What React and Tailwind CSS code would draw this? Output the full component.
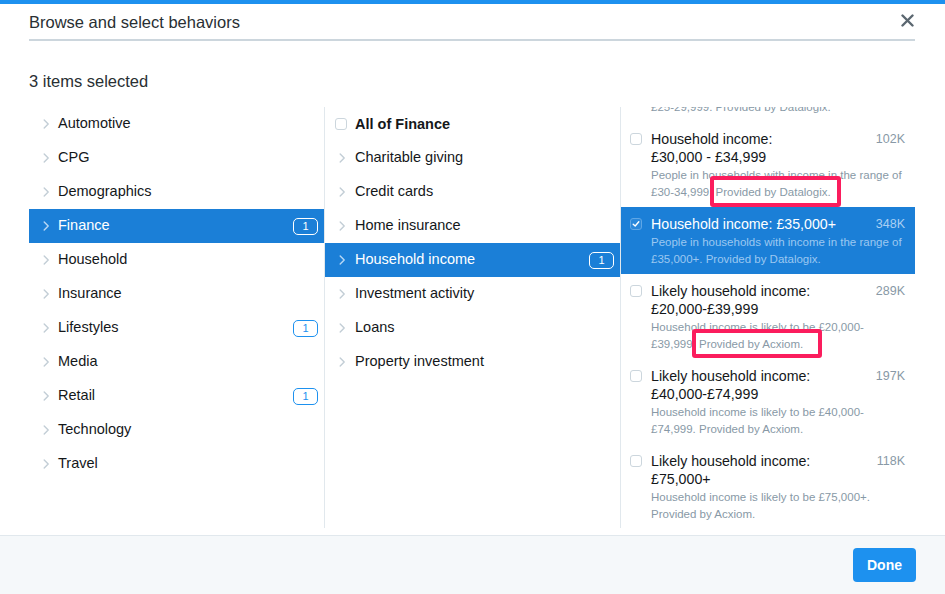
import { useState } from 'react';

const categories = [
    'Automotive', 'CPG', 'Demographics', 'Finance', 'Household', 'Insurance',
    'Lifestyles', 'Media', 'Retail', 'Technology', 'Travel',
];
const categoryCounts = { Finance: 1, Lifestyles: 1, Retail: 1 };

const financeItems = [
    'Charitable giving', 'Credit cards', 'Home insurance', 'Household income',
    'Investment activity', 'Loans', 'Property investment',
];
const financeCounts = { 'Household income': 1 };

// desc lines: a string, or [before, flagged] where the flagged part gets a marker box
const behaviors = [
    {
        id: 1,
        title: ['Household income:', '£25,000\u00a0-\u00a0£29,999'],
        size: '96K',
        desc: ['People in households with income in the range of', '£25-29,999. Provided by Datalogix.'],
    },
    {
        id: 2,
        title: ['Household income:', '£30,000\u00a0-\u00a0£34,999'],
        size: '102K',
        desc: ['People in households with income in the range of', ['£30-34,999. ', 'Provided by Datalogix.']],
        mark: 'datalogix',
    },
    {
        id: 3,
        title: ['Household income: £35,000+'],
        size: '348K',
        desc: ['People in households with income in the range of', '£35,000+. Provided by Datalogix.'],
    },
    {
        id: 4,
        title: ['Likely household income:', '£20,000-£39,999'],
        size: '289K',
        desc: ['Household income is likely to be £20,000-', ['£39,999. ', 'Provided by Acxiom.']],
        mark: 'acxiom',
    },
    {
        id: 5,
        title: ['Likely household income:', '£40,000-£74,999'],
        size: '197K',
        desc: ['Household income is likely to be £40,000-', '£74,999. Provided by Acxiom.'],
    },
    {
        id: 6,
        title: ['Likely household income:', '£75,000+'],
        size: '118K',
        desc: ['Household income is likely to be £75,000+.', 'Provided by Acxiom.'],
    },
];

function Chevron({ light }) {
    return (
        <svg width="8" height="10" viewBox="0 0 8 10" className="shrink-0 mr-[8px]">
            <polyline
                points="2.2,1 6.2,5 2.2,9"
                fill="none"
                stroke={light ? '#b9d8f5' : '#c3ced6'}
                strokeWidth="1.4"
                strokeLinecap="round"
                strokeLinejoin="round"
            />
        </svg>
    );
}

function Badge({ n, active }) {
    return (
        <span className={`ml-auto mr-[6px] w-[25px] h-[17px] flex items-center justify-center rounded-[5px] border-[1.5px] text-[11px] leading-none ${
            active ? 'border-white text-white' : 'border-[#1d91ef] text-[#1d91ef]'
        }`}>
            {n}
        </span>
    );
}

function Checkbox({ checked }) {
    if (checked) {
        return (
            <span className="block w-[12px] h-[12px] shrink-0 rounded-[3px] border border-[#5ea6e6] bg-[#2a88db] flex items-center justify-center">
                <svg width="8" height="8" viewBox="0 0 8 8">
                    <polyline points="1.2,4.2 3.2,6 6.8,1.8" fill="none" stroke="#fff" strokeWidth="1.4" strokeLinecap="round" strokeLinejoin="round" />
                </svg>
            </span>
        );
    }
    return <span className="block w-[12px] h-[12px] shrink-0 rounded-[3px] border border-[#ccd6dd] bg-white" />;
}

function Flagged({ text, kind }) {
    return (
        <span className="relative inline-block leading-[17px]">
            {text}
            {kind === 'datalogix' ? (
                <span className="absolute -top-[8px] -bottom-[6px] -left-[6px] -right-[10px] border-4 border-[#fb1d5d] rounded-[3px]" />
            ) : (
                <span className="absolute -top-[7px] -bottom-[5px] -left-[7px] -right-[19px] border-4 border-[#fb1d5d] rounded-[3px]" />
            )}
        </span>
    );
}

function BehaviorRow({ item, selected }) {
    return (
        <div className={`flex pl-[9px] pr-[10px] pt-[8px] pb-[6px] ${selected ? 'bg-[#1b7fd7]' : ''}`}>
            <div className="mt-[3px] mr-[9px]">
                <Checkbox checked={selected} />
            </div>
            <div className="flex-1 min-w-0">
                <div className="flex justify-between">
                    <div className={`text-[14.2px] leading-[18px] ${selected ? 'text-white' : 'text-[#14171a]'}`}>
                        {item.title.map(line => <div key={line}>{line}</div>)}
                    </div>
                    <span className={`text-[12.5px] leading-[18px] ${selected ? 'text-[#a9cff3]' : 'text-[#8899a6]'}`}>{item.size}</span>
                </div>
                <div className={`mt-[1px] text-[11.5px] leading-[17px] whitespace-nowrap ${selected ? 'text-[#9cc8f1]' : 'text-[#8899a6]'}`}>
                    {item.desc.map((line, i) => (
                        <div key={i}>
                            {Array.isArray(line) ? (
                                <>{line[0]}<Flagged text={line[1]} kind={item.mark} /></>
                            ) : line}
                        </div>
                    ))}
                </div>
            </div>
        </div>
    );
}

export default function App() {
    const [category, setCategory] = useState('Finance');
    const [sub, setSub]           = useState('Household income');

    return (
        <div className="w-[945px] h-[594px] bg-white flex flex-col font-['Liberation_Sans',Arial,sans-serif] text-[#14171a]">
            <div className="h-[4px] bg-[#1d91ef]" />

            <div className="pl-[29px] pr-[30px]">
                {/* Header */}
                <div className="h-[37px] flex items-center justify-between border-b-2 border-[#ccd6dd]">
                    <h1 className="text-[16.5px] text-[#292f33] mt-[2px]">Browse and select behaviors</h1>
                    <button className="mr-[1px] mb-[2px]">
                        <svg width="13" height="13" viewBox="0 0 13 13">
                            <path d="M1.5 1.5 L11.5 11.5 M11.5 1.5 L1.5 11.5" stroke="#5b6770" strokeWidth="2.4" strokeLinecap="round" />
                        </svg>
                    </button>
                </div>

                <p className="mt-[30px] mb-[16px] text-[16.5px] leading-[20px] text-[#292f33]">3 items selected</p>

                {/* Columns */}
                <div className="flex h-[421px]">
                    <div className="w-[296px] border-r border-[#e1e8ed]">
                        {categories.map(c => {
                            const active = c === category;
                            return (
                                <div
                                    key={c}
                                    onClick={() => setCategory(c)}
                                    className={`h-[34px] flex items-center pl-[13px] text-[14.5px] cursor-pointer ${active ? 'bg-[#1b7fd7] text-white' : ''}`}
                                >
                                    <Chevron light={active} />
                                    <span>{c}</span>
                                    {categoryCounts[c] && <Badge n={categoryCounts[c]} active={active} />}
                                </div>
                            );
                        })}
                    </div>

                    <div className="w-[296px] border-r border-[#e1e8ed]">
                        <div className="h-[34px] flex items-center pl-[10px] gap-[8px] text-[14.5px] font-bold">
                            <Checkbox />
                            <span className="mt-[1px]">All of Finance</span>
                        </div>
                        {financeItems.map(f => {
                            const active = f === sub;
                            return (
                                <div
                                    key={f}
                                    onClick={() => setSub(f)}
                                    className={`h-[34px] flex items-center pl-[13px] text-[14.5px] cursor-pointer ${active ? 'bg-[#1b7fd7] text-white' : ''}`}
                                >
                                    <Chevron light={active} />
                                    <span className="ml-[1px]">{f}</span>
                                    {financeCounts[f] && <Badge n={financeCounts[f]} active={active} />}
                                </div>
                            );
                        })}
                    </div>

                    <div className="flex-1 overflow-hidden">
                        <div className="-mt-[70px]">
                            {behaviors.map(b => (
                                <BehaviorRow key={b.id} item={b} selected={b.id === 3} />
                            ))}
                        </div>
                    </div>
                </div>
            </div>

            {/* Footer */}
            <div className="mt-auto h-[59px] border-t border-[#e1e8ed] bg-[#f5f8fa] flex items-center justify-end pr-[29px]">
                <button className="w-[63px] h-[34px] rounded-[4px] bg-[#1d91ef] text-white text-[14px] font-bold">Done</button>
            </div>
        </div>
    );
}
